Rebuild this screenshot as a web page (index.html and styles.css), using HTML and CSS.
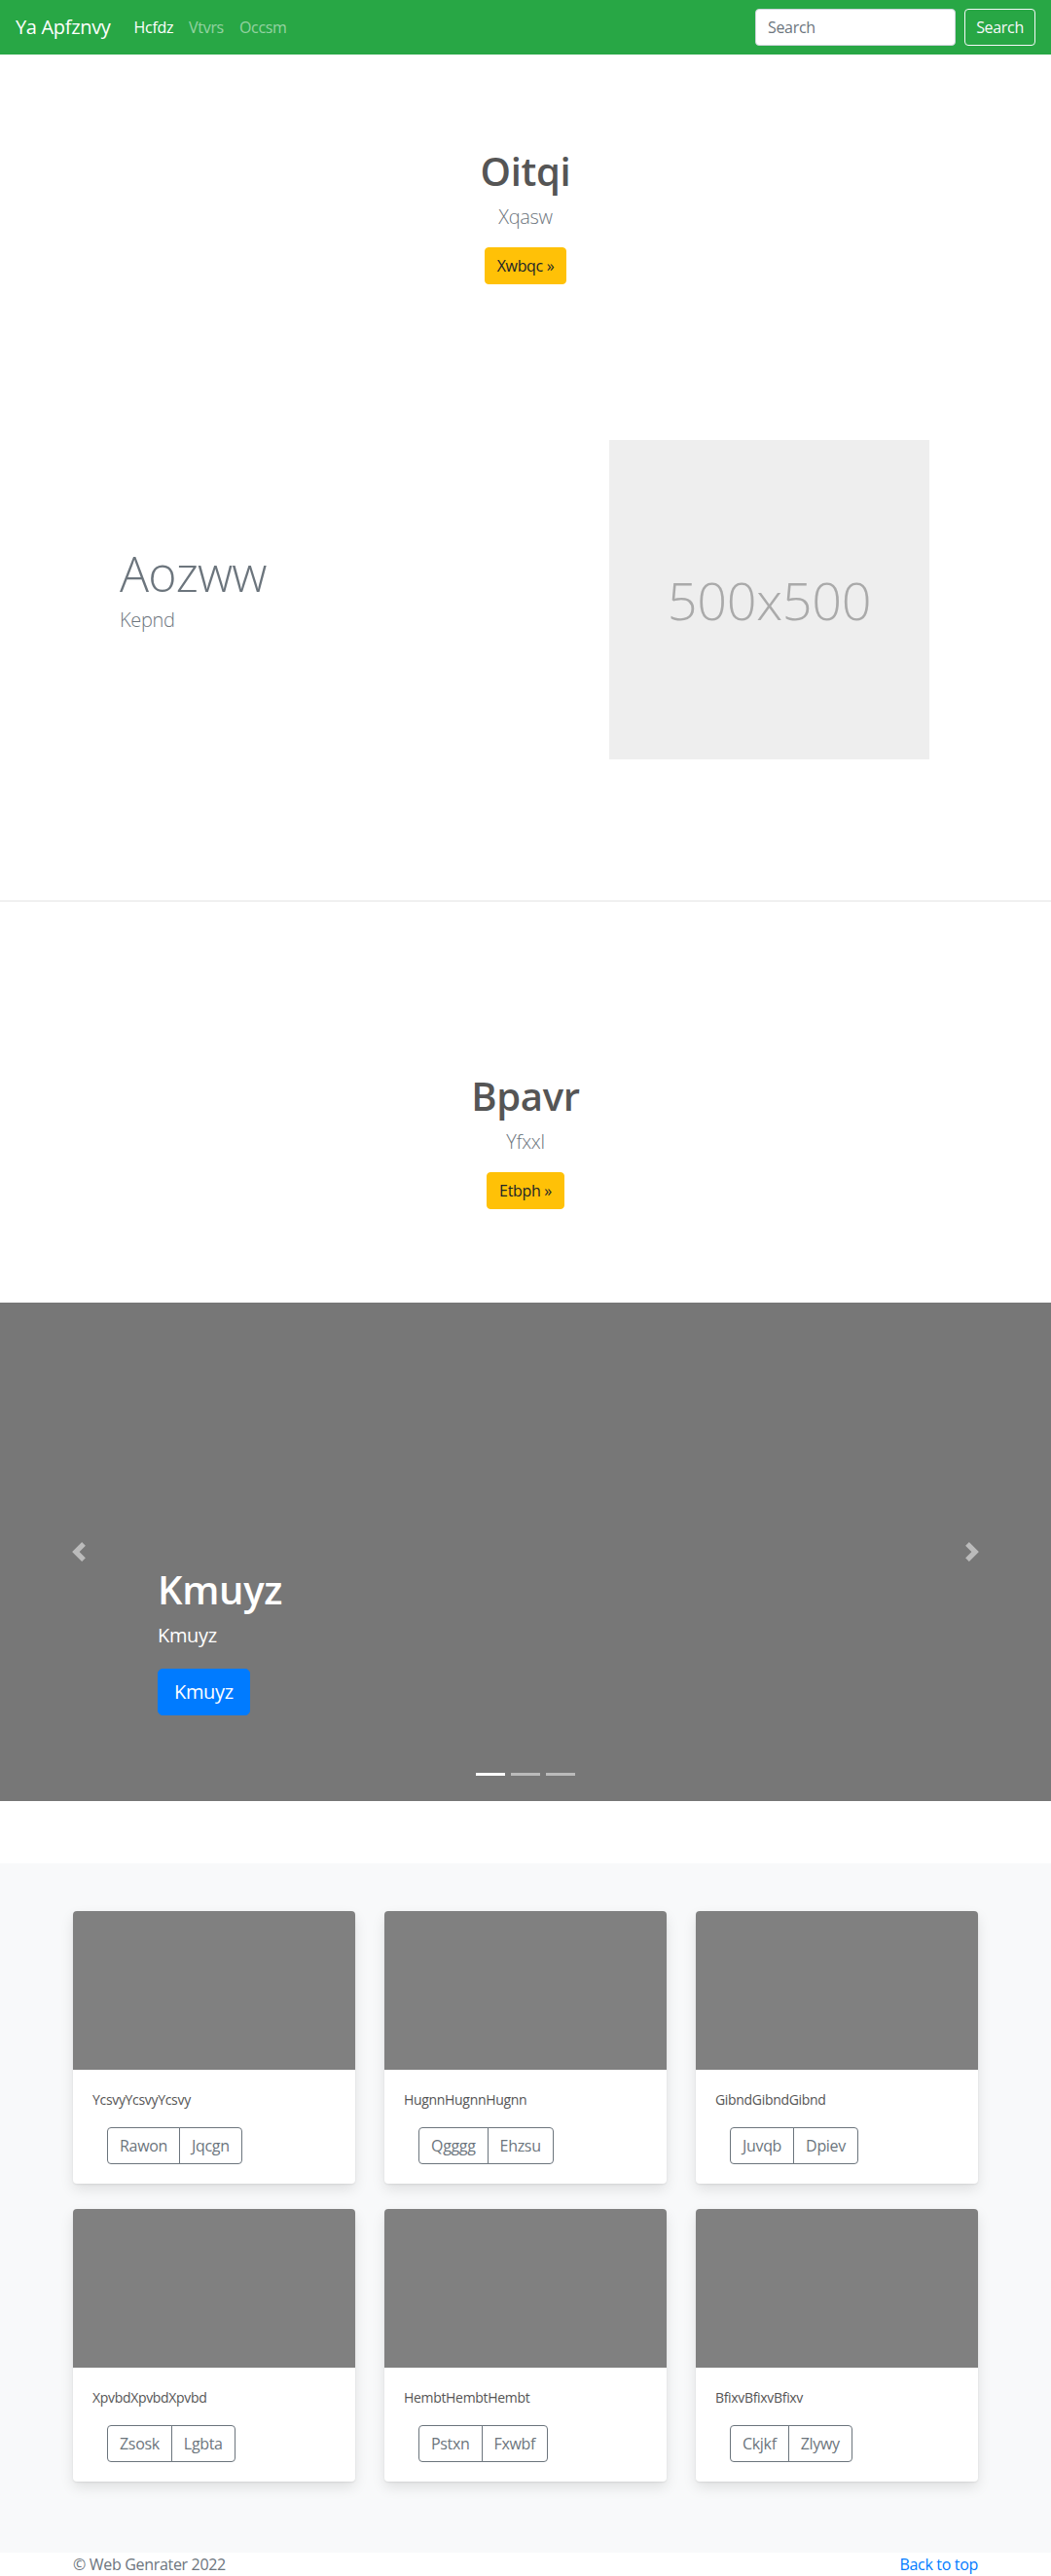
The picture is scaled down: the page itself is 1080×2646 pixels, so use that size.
FILE: index.html
```html
<!DOCTYPE html>
<html lang="en">
<head>
<meta charset="utf-8">
<title>Ya Apfznvy</title>
<link rel="stylesheet" href="styles.css">
</head>
<body>
<header class="navbar">
  <a class="brand" href="#">Ya Apfznvy</a>
  <nav class="nav">
    <a class="nav-link active" href="#">Hcfdz</a>
    <a class="nav-link" href="#">Vtvrs</a>
    <a class="nav-link" href="#">Occsm</a>
  </nav>
  <form class="search">
    <input class="search-input" type="text" placeholder="Search">
    <button class="btn-search" type="button">Search</button>
  </form>
</header>
<main>
  <section class="hero hero-first">
    <h1 class="hero-title">Oitqi</h1>
    <p class="lead muted">Xqasw</p>
    <div class="hero-action"><a class="btn btn-warning" href="#">Xwbqc &raquo;</a></div>
  </section>

  <section class="featurette">
    <div class="feat-text">
      <h2 class="feat-heading">Aozww</h2>
      <p class="lead muted">Kepnd</p>
    </div>
    <div class="placeholder">500x500</div>
  </section>

  <hr class="divider">

  <section class="hero hero-second">
    <h1 class="hero-title">Bpavr</h1>
    <p class="lead muted">Yfxxl</p>
    <div class="hero-action"><a class="btn btn-warning" href="#">Etbph &raquo;</a></div>
  </section>

  <section class="carousel">
    <a class="control control-prev" href="#" aria-label="Previous">
      <svg width="20" height="20" viewBox="0 0 8 8"><path fill="#fff" d="M5.25 0l-4 4 4 4 1.5-1.5L4.25 4l2.5-2.5L5.25 0z"/></svg>
    </a>
    <a class="control control-next" href="#" aria-label="Next">
      <svg width="20" height="20" viewBox="0 0 8 8"><path fill="#fff" d="M2.75 0l-1.5 1.5L3.75 4l-2.5 2.5L2.75 8l4-4-4-4z"/></svg>
    </a>
    <div class="caption">
      <h1 class="caption-title">Kmuyz</h1>
      <p class="caption-text">Kmuyz</p>
      <a class="btn btn-lg btn-primary" href="#">Kmuyz</a>
    </div>
    <ol class="indicators">
      <li class="indicator active"></li>
      <li class="indicator"></li>
      <li class="indicator"></li>
    </ol>
  </section>

  <section class="album">
    <div class="album-grid">
      <div class="card">
        <div class="card-img"></div>
        <div class="card-body">
          <p class="card-text">YcsvyYcsvyYcsvy</p>
          <div class="btn-group"><a class="btn btn-outline" href="#">Rawon</a><a class="btn btn-outline" href="#">Jqcgn</a></div>
        </div>
      </div>
      <div class="card">
        <div class="card-img"></div>
        <div class="card-body">
          <p class="card-text">HugnnHugnnHugnn</p>
          <div class="btn-group"><a class="btn btn-outline" href="#">Qgggg</a><a class="btn btn-outline" href="#">Ehzsu</a></div>
        </div>
      </div>
      <div class="card">
        <div class="card-img"></div>
        <div class="card-body">
          <p class="card-text">GibndGibndGibnd</p>
          <div class="btn-group"><a class="btn btn-outline" href="#">Juvqb</a><a class="btn btn-outline" href="#">Dpiev</a></div>
        </div>
      </div>
      <div class="card">
        <div class="card-img"></div>
        <div class="card-body">
          <p class="card-text">XpvbdXpvbdXpvbd</p>
          <div class="btn-group"><a class="btn btn-outline" href="#">Zsosk</a><a class="btn btn-outline" href="#">Lgbta</a></div>
        </div>
      </div>
      <div class="card">
        <div class="card-img"></div>
        <div class="card-body">
          <p class="card-text">HembtHembtHembt</p>
          <div class="btn-group"><a class="btn btn-outline" href="#">Pstxn</a><a class="btn btn-outline" href="#">Fxwbf</a></div>
        </div>
      </div>
      <div class="card">
        <div class="card-img"></div>
        <div class="card-body">
          <p class="card-text">BfixvBfixvBfixv</p>
          <div class="btn-group"><a class="btn btn-outline" href="#">Ckjkf</a><a class="btn btn-outline" href="#">Zlywy</a></div>
        </div>
      </div>
    </div>
  </section>
</main>
<footer class="footer">
  <p class="footer-copy">&copy; Web Genrater 2022</p>
  <p class="footer-top"><a href="#">Back to top</a></p>
</footer>
</body>
</html>
```

FILE: styles.css
```css
* { box-sizing: border-box; }

body {
  margin: 0;
  font-family: "Open Sans", "Noto Sans", sans-serif;
  font-size: 16px;
  line-height: 1.5;
  letter-spacing: -0.02em;
  color: #212529;
  background: #fff;
}

a { text-decoration: none; }

/* Navbar */
.navbar {
  display: flex;
  align-items: center;
  height: 56px;
  padding: 0 16px;
  background: #28a745;
}
.brand {
  font-size: 20px;
  line-height: 30px;
  color: #fff;
  margin-right: 16px;
}
.nav { display: flex; }
.nav-link {
  padding: 8px;
  line-height: 24px;
  color: rgba(255, 255, 255, 0.5);
}
.nav-link.active { color: #fff; }
.search {
  margin: 0 0 0 auto;
  display: flex;
  gap: 9px;
}
.search-input {
  width: 206px;
  height: 38px;
  padding: 6px 12px;
  border: 1px solid #ced4da;
  border-radius: 4px;
  font: inherit;
  font-size: 16px;
  letter-spacing: -0.02em;
  color: #495057;
  background: #fff;
}
.search-input::placeholder { color: #6c757d; }
.btn-search {
  width: 73px;
  height: 38px;
  border: 1px solid #f8f9fa;
  border-radius: 4px;
  background: transparent;
  color: #f8f9fa;
  font: inherit;
  font-size: 16px;
  letter-spacing: -0.02em;
  padding: 0;
}

/* Buttons */
.btn {
  display: inline-block;
  padding: 6px 12px;
  font-size: 16px;
  line-height: 24px;
  border: 1px solid transparent;
  border-radius: 4px;
  text-align: center;
}
.btn-warning {
  background: #ffc107;
  border-color: #ffc107;
  color: #212529;
}
.btn-lg {
  padding: 8px 16px;
  font-size: 20px;
  line-height: 30px;
  border-radius: 5px;
}
.btn-primary {
  background: #007bff;
  border-color: #007bff;
  color: #fff;
}

/* Hero */
.hero { text-align: center; }
.hero-first { padding-top: 96px; }
.hero-second { padding-top: 176px; padding-bottom: 96px; }
.hero-title {
  margin: 0 0 8px;
  font-size: 40px;
  line-height: 48px;
  font-weight: 600;
  color: #555;
}
.lead {
  margin: 0 0 16px;
  font-size: 20px;
  line-height: 30px;
  font-weight: 300;
}
.muted { color: #6c757d; }
.hero-action { display: flex; justify-content: center; }

/* Featurette */
.featurette {
  display: flex;
  align-items: center;
  margin-top: 160px;
  padding-left: 123px;
}
.feat-text { width: 503px; }
.feat-heading {
  margin: 0 0 8px;
  font-size: 50px;
  line-height: 50px;
  font-weight: 300;
  letter-spacing: -0.8px;
  color: #6c757d;
}
.placeholder {
  width: 329px;
  height: 328px;
  background: #eee;
  color: #aaa;
  font-size: 54px;
  font-weight: 300;
  display: flex;
  align-items: center;
  justify-content: center;
}
.divider {
  margin: 145px 0 0;
  border: 0;
  border-top: 1px solid #e5e5e5;
  height: 0;
}

/* Carousel */
.carousel {
  position: relative;
  height: 512px;
  background: #777;
  margin-bottom: 64px;
}
.control {
  position: absolute;
  top: 0;
  bottom: 0;
  width: 15%;
  display: flex;
  align-items: center;
  justify-content: center;
  opacity: 0.5;
}
.control-prev { left: 0; }
.control-next { right: 0; }
.caption {
  position: absolute;
  left: 15%;
  right: 15%;
  top: 271px;
  color: #fff;
}
.caption-title {
  margin: 0 0 8px;
  font-size: 40px;
  line-height: 48px;
  font-weight: 600;
}
.caption-text {
  margin: 0 0 19px;
  font-size: 20px;
  line-height: 30px;
}
.indicators {
  position: absolute;
  left: 0;
  right: 0;
  bottom: 26px;
  margin: 0;
  padding: 0;
  list-style: none;
  display: flex;
  justify-content: center;
  gap: 6px;
}
.indicator {
  width: 30px;
  height: 3px;
  background: #fff;
  opacity: 0.5;
}
.indicator.active { opacity: 1; }

/* Album */
.album {
  background: #f8f9fa;
  padding: 49px 0 73px;
}
.album-grid {
  width: 930px;
  margin: 0 auto;
  display: grid;
  grid-template-columns: repeat(3, 290px);
  column-gap: 30px;
  row-gap: 26px;
}
.card {
  background: #fff;
  border-radius: 4px;
  overflow: hidden;
  box-shadow: 0 1px 2px rgba(0, 0, 0, 0.08), 0 6px 14px rgba(0, 0, 0, 0.1);
}
.card-img {
  height: 163px;
  background: #808080;
}
.card-body { padding: 20px; }
.card-text {
  margin: 0 0 18px;
  font-size: 14px;
  line-height: 21px;
  color: #555;
}
.btn-group {
  display: inline-flex;
  margin-left: 15px;
}
.btn-outline {
  color: #6c757d;
  border-color: #6c757d;
  background: transparent;
}
.btn-group .btn-outline:first-child { border-radius: 4px 0 0 4px; }
.btn-group .btn-outline:last-child { border-radius: 0 4px 4px 0; margin-left: -1px; }

/* Footer */
.footer {
  width: 930px;
  margin: 0 auto;
  display: flex;
  justify-content: space-between;
  color: #6c757d;
  padding-bottom: 16px;
}
.footer p { margin: 0; line-height: 24px; }
.footer-top a { color: #007bff; }
```
